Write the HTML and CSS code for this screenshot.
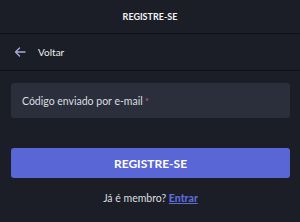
FILE: index.html
```html
<!DOCTYPE html>
<html lang="pt">
<head>
<meta charset="utf-8">
<link rel="stylesheet" href="styles.css">
</head>
<body>
<div class="page">
  <header class="header">REGISTRE-SE</header>
  <div class="back">
    <svg class="arrow" width="12" height="10" viewBox="0 0 12 10" fill="none" stroke="#a9acd9" stroke-width="1.3" stroke-linecap="round" stroke-linejoin="round"><path d="M11 5H1.5M5.5 1L1.5 5l4 4"/></svg>
    <span>Voltar</span>
  </div>
  <main class="form">
    <div class="field">Código enviado por e-mail <span class="req">*</span></div>
    <button class="btn">REGISTRE-SE</button>
    <p class="foot">Já é membro? <a class="link">Entrar</a></p>
  </main>
</div>
</body>
</html>
```
FILE: styles.css
```css
html, body { margin: 0; padding: 0; }
body {
  background: #1b1e26;
  font-family: "Lato", "Open Sans", sans-serif;
  color: #e4e5e9;
  width: 300px;
  height: 222px;
  overflow: hidden;
}
.header {
  height: 33px;
  border-bottom: 1px solid #0f1116;
  display: flex;
  align-items: center;
  justify-content: center;
  font-weight: 700;
  font-size: 9px;
  color: #f2f2f4;
}
.back {
  height: 36px;
  border-bottom: 1px solid #0f1116;
  display: flex;
  align-items: center;
  padding-left: 14px;
  gap: 12px;
  font-size: 10px;
  color: #eeeef0;
}
.arrow { display: block; }
.form {
  padding: 12px 10px 0 11px;
}
.field {
  height: 35px;
  background: #2a2f3b;
  border-radius: 3px;
  display: flex;
  align-items: center;
  padding-left: 11px;
  font-size: 10.5px;
  color: #dcdde2;
}
.req { color: #c75a73; margin-left: 2px; font-size: 10px; }
.btn {
  display: block;
  width: 100%;
  height: 30px;
  margin-top: 30px;
  border: 0;
  border-radius: 3px;
  background: #5966d6;
  color: #ffffff;
  font-family: inherit;
  font-weight: 700;
  font-size: 12px;
  padding: 0;
}
.foot {
  margin: 14px 0 0;
  text-align: center;
  font-size: 10.5px;
  color: #dcdde2;
}
.link {
  color: #5f6cdc;
  font-weight: 900;
  text-decoration: underline;
}
```
